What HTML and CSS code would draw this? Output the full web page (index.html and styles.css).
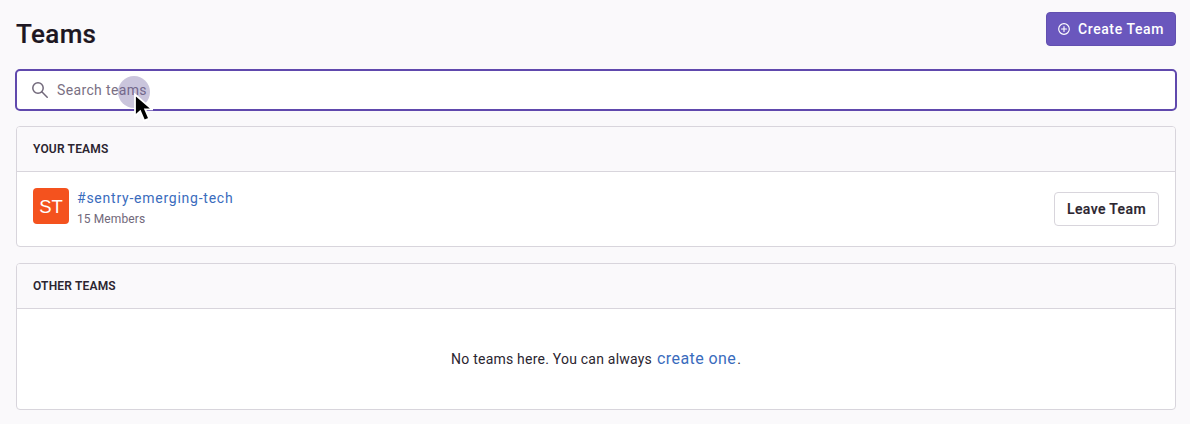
FILE: index.html
```html
<!DOCTYPE html>
<html lang="en">
<head>
<meta charset="utf-8">
<title>Teams</title>
<link rel="stylesheet" href="styles.css">
</head>
<body>
<main class="page">
  <header class="page-header">
    <h1 class="title"><span>Teams</span></h1>
    <button class="button primary">
      <svg class="add-icon" viewBox="0 0 16 16" fill="none" stroke="currentColor" stroke-width="1.5" stroke-linecap="round"><circle cx="8" cy="8" r="7.1"/><path d="M8 4.7v6.6M4.7 8h6.6"/></svg>
      <span class="create-label">Create Team</span>
    </button>
  </header>
  <div class="search">
    <svg class="search-icon" viewBox="0 0 16 16" fill="none" stroke="currentColor" stroke-width="1.5" stroke-linecap="round"><circle cx="6" cy="6" r="5.2"/><path d="M9.8 9.8l5.4 5.4"/></svg>
    <span class="placeholder">Search teams</span>
    <span class="click-ring"></span>
    <svg class="cursor" viewBox="0 0 20 31"><path d="M2 1.5V23l5.2-4.7 4 9.4 5-2.1-4-9.2h7z" fill="#000" stroke="#fff" stroke-width="1.8"/></svg>
  </div>
  <section class="panel">
    <h2 class="panel-header"><span class="panel-label">YOUR TEAMS</span></h2>
    <div class="team-row">
      <div class="avatar">ST</div>
      <div class="team-info">
        <a class="team-name">#sentry-emerging-tech</a>
        <span class="members">15 Members</span>
      </div>
      <button class="button secondary"><span class="leave-label">Leave Team</span></button>
    </div>
  </section>
  <section class="panel">
    <h2 class="panel-header"><span class="panel-label">OTHER TEAMS</span></h2>
    <div class="empty"><span class="empty-text">No teams here. You can always</span><a class="create-link">create one</a><span class="period">.</span></div>
  </section>
</main>
</body>
</html>
```
FILE: styles.css
```css
* { box-sizing: border-box; }
body {
  margin: 0;
  height: 424px;
  overflow: hidden;
  background: #faf9fb;
  color: #2b2530;
  font-family: Roboto, "Liberation Sans", sans-serif;
  font-size: 14px;
}
.page { padding: 12px 14px 0 16px; }
.page-header { display: flex; justify-content: space-between; height: 57px; }
.title { margin: 7px 0 0; font-size: 26px; line-height: 31px; font-weight: 500; letter-spacing: .35px; color: #1d1722; -webkit-text-stroke: .2px currentColor; }
.button { display: flex; align-items: center; justify-content: center; height: 34px; border-radius: 4px; font: 500 14px/16px Roboto, sans-serif; }
.primary { width: 130px; gap: 8px; padding: 0; background: #6a57bd; border: 1px solid #6250b0; color: #fff; }
.add-icon { width: 12px; height: 12px; }
.create-label { letter-spacing: .6px; }
.search {
  position: relative;
  display: flex;
  align-items: center;
  gap: 9px;
  width: 1162px;
  height: 42px;
  margin-left: -1px;
  padding-left: 15px;
  background: #fff;
  border: 2px solid #6049ad;
  border-radius: 5px;
  color: #7a7083;
}
.search-icon { width: 16px; height: 16px; color: #71687a; }
.placeholder { letter-spacing: .36px; }
.click-ring { position: absolute; left: 101px; top: 5px; width: 32px; height: 32px; border-radius: 50%; background: rgba(102, 90, 155, .35); }
.cursor { position: absolute; left: 116px; top: 22px; width: 20px; height: 31px; }
.panel { margin: 15px 0 16px; background: #fff; border: 1px solid #d8d5dc; border-radius: 4px; }
.panel + .panel { margin-top: 0; }
.panel-header { display: flex; align-items: center; height: 45px; margin: 0; padding: 0 16px; border-bottom: 1px solid #d8d5dc; border-radius: 3px 3px 0 0; background: #faf9fb; font-size: 12px; line-height: 14px; font-weight: 600; }
.panel-label { letter-spacing: .18px; }
.team-row { display: flex; align-items: flex-start; height: 74px; padding: 16px; }
.avatar { width: 36px; height: 36px; border-radius: 4px; background: #f4521e; color: #fff; font-family: "Liberation Sans", sans-serif; font-size: 18.5px; line-height: 37px; text-align: center; }
.team-info { display: flex; flex-direction: column; flex: 1; margin-left: 8px; gap: 4px; }
.team-name { color: #3a6cbd; line-height: 20px; letter-spacing: .76px; }
.members { color: #71687a; font-size: 12px; line-height: 14px; letter-spacing: .1px; }
.secondary { width: 105px; padding: 0; margin-top: 4px; background: #fff; border: 1px solid #d8d5dc; color: #2b2530; }
.leave-label { letter-spacing: .4px; -webkit-text-stroke: .2px currentColor; }
.empty { display: flex; align-items: baseline; justify-content: center; height: 100px; padding-top: 40px; line-height: 20px; }
.empty-text { letter-spacing: .22px; }
.create-link { margin-left: 5px; color: #3a6cbd; font-size: 16px; letter-spacing: .42px; }
.period { margin-left: 1px; }
```
